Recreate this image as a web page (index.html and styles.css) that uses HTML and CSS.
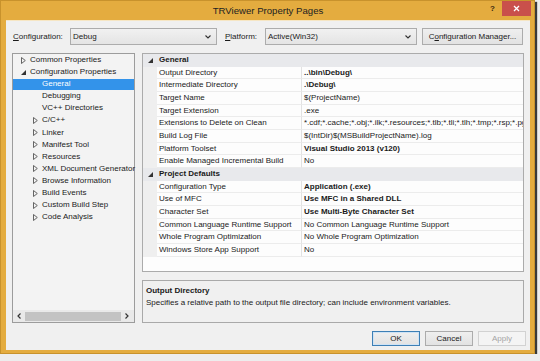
FILE: index.html
```html
<!DOCTYPE html>
<html>
<head>
<meta charset="utf-8">
<link rel="stylesheet" href="styles.css">
</head>
<body>
<div class="window">
  <div class="titlebar">
    <div></div>
    <div class="title">TRViewer Property Pages</div>
    <div class="controls">
      <span class="help">?</span>
      <span class="close"><svg width="7" height="7" viewBox="0 0 7 7"><path d="M1 1L6 6M6 1L1 6" stroke="#fff" stroke-width="1.3"/></svg></span>
    </div>
  </div>
  <div class="client">
    <div class="config-row">
      <span class="lbl lbl-config"><u>C</u>onfiguration:</span>
      <div class="combo combo-config"><span>Debug</span><svg width="6" height="4" viewBox="0 0 6 4"><path d="M0.5 0.5L3 3L5.5 0.5" fill="none" stroke="#333" stroke-width="1.1"/></svg></div>
      <span class="lbl lbl-platform"><u>P</u>latform:</span>
      <div class="combo combo-platform"><span>Active(Win32)</span><svg width="6" height="4" viewBox="0 0 6 4"><path d="M0.5 0.5L3 3L5.5 0.5" fill="none" stroke="#333" stroke-width="1.1"/></svg></div>
      <div class="btn btn-manager">C<u>o</u>nfiguration Manager...</div>
    </div>
    <div class="main">
      <div class="tree">
        <div class="tree-items">
          <div class="ti l0"><span class="tw"><svg width="5" height="7" viewBox="0 0 5 7"><path d="M0.5 0.5L4.3 3.5L0.5 6.5Z" fill="none" stroke="#555" stroke-width="0.9"/></svg></span>Common Properties</div>
          <div class="ti l0"><span class="tw"><svg width="5" height="5" viewBox="0 0 5 5"><path d="M5 0L5 5L0 5Z" fill="#333"/></svg></span>Configuration Properties</div>
          <div class="ti l1 sel"><span class="tw"></span>General</div>
          <div class="ti l1"><span class="tw"></span>Debugging</div>
          <div class="ti l1"><span class="tw"></span>VC++ Directories</div>
          <div class="ti l1"><span class="tw"><svg width="5" height="7" viewBox="0 0 5 7"><path d="M0.5 0.5L4.3 3.5L0.5 6.5Z" fill="none" stroke="#555" stroke-width="0.9"/></svg></span>C/C++</div>
          <div class="ti l1"><span class="tw"><svg width="5" height="7" viewBox="0 0 5 7"><path d="M0.5 0.5L4.3 3.5L0.5 6.5Z" fill="none" stroke="#555" stroke-width="0.9"/></svg></span>Linker</div>
          <div class="ti l1"><span class="tw"><svg width="5" height="7" viewBox="0 0 5 7"><path d="M0.5 0.5L4.3 3.5L0.5 6.5Z" fill="none" stroke="#555" stroke-width="0.9"/></svg></span>Manifest Tool</div>
          <div class="ti l1"><span class="tw"><svg width="5" height="7" viewBox="0 0 5 7"><path d="M0.5 0.5L4.3 3.5L0.5 6.5Z" fill="none" stroke="#555" stroke-width="0.9"/></svg></span>Resources</div>
          <div class="ti l1"><span class="tw"><svg width="5" height="7" viewBox="0 0 5 7"><path d="M0.5 0.5L4.3 3.5L0.5 6.5Z" fill="none" stroke="#555" stroke-width="0.9"/></svg></span>XML Document Generator</div>
          <div class="ti l1"><span class="tw"><svg width="5" height="7" viewBox="0 0 5 7"><path d="M0.5 0.5L4.3 3.5L0.5 6.5Z" fill="none" stroke="#555" stroke-width="0.9"/></svg></span>Browse Information</div>
          <div class="ti l1"><span class="tw"><svg width="5" height="7" viewBox="0 0 5 7"><path d="M0.5 0.5L4.3 3.5L0.5 6.5Z" fill="none" stroke="#555" stroke-width="0.9"/></svg></span>Build Events</div>
          <div class="ti l1"><span class="tw"><svg width="5" height="7" viewBox="0 0 5 7"><path d="M0.5 0.5L4.3 3.5L0.5 6.5Z" fill="none" stroke="#555" stroke-width="0.9"/></svg></span>Custom Build Step</div>
          <div class="ti l1"><span class="tw"><svg width="5" height="7" viewBox="0 0 5 7"><path d="M0.5 0.5L4.3 3.5L0.5 6.5Z" fill="none" stroke="#555" stroke-width="0.9"/></svg></span>Code Analysis</div>
        </div>
        <div class="hscroll">
          <span class="arrow"><svg width="4" height="6" viewBox="0 0 4 6"><path d="M3.5 0.5L1 3L3.5 5.5" fill="none" stroke="#333" stroke-width="1.2"/></svg></span>
          <span class="thumb"></span>
          <span class="arrow"><svg width="4" height="6" viewBox="0 0 4 6"><path d="M0.5 0.5L3 3L0.5 5.5" fill="none" stroke="#333" stroke-width="1.2"/></svg></span>
        </div>
      </div>
      <div class="right">
        <div class="grid">
          <div class="row hdr"><span class="gut"><svg width="5" height="5" viewBox="0 0 5 5"><path d="M5 0L5 5L0 5Z" fill="#333"/></svg></span><span class="htext">General</span></div>
          <div class="row"><span class="gut"></span><span class="name">Output Directory</span><span class="val b">..\bin\Debug\</span></div>
          <div class="row"><span class="gut"></span><span class="name">Intermediate Directory</span><span class="val b">.\Debug\</span></div>
          <div class="row"><span class="gut"></span><span class="name">Target Name</span><span class="val">$(ProjectName)</span></div>
          <div class="row"><span class="gut"></span><span class="name">Target Extension</span><span class="val">.exe</span></div>
          <div class="row"><span class="gut"></span><span class="name">Extensions to Delete on Clean</span><span class="val">*.cdf;*.cache;*.obj;*.ilk;*.resources;*.tlb;*.tli;*.tlh;*.tmp;*.rsp;*.pg</span></div>
          <div class="row"><span class="gut"></span><span class="name">Build Log File</span><span class="val">$(IntDir)$(MSBuildProjectName).log</span></div>
          <div class="row"><span class="gut"></span><span class="name">Platform Toolset</span><span class="val b">Visual Studio 2013 (v120)</span></div>
          <div class="row"><span class="gut"></span><span class="name">Enable Managed Incremental Build</span><span class="val">No</span></div>
          <div class="row hdr"><span class="gut"><svg width="5" height="5" viewBox="0 0 5 5"><path d="M5 0L5 5L0 5Z" fill="#333"/></svg></span><span class="htext">Project Defaults</span></div>
          <div class="row"><span class="gut"></span><span class="name">Configuration Type</span><span class="val b">Application (.exe)</span></div>
          <div class="row"><span class="gut"></span><span class="name">Use of MFC</span><span class="val b">Use MFC in a Shared DLL</span></div>
          <div class="row"><span class="gut"></span><span class="name">Character Set</span><span class="val b">Use Multi-Byte Character Set</span></div>
          <div class="row"><span class="gut"></span><span class="name">Common Language Runtime Support</span><span class="val">No Common Language Runtime Support</span></div>
          <div class="row"><span class="gut"></span><span class="name">Whole Program Optimization</span><span class="val">No Whole Program Optimization</span></div>
          <div class="row"><span class="gut"></span><span class="name">Windows Store App Support</span><span class="val">No</span></div>
        </div>
        <div class="desc">
          <div class="desc-title">Output Directory</div>
          <div class="desc-text">Specifies a relative path to the output file directory; can include environment variables.</div>
        </div>
      </div>
    </div>
    <div class="buttons">
      <div class="btn btn-ok">OK</div>
      <div class="btn">Cancel</div>
      <div class="btn btn-disabled">Apply</div>
    </div>
  </div>
</div>
</body>
</html>
```

FILE: styles.css
```css
* { box-sizing: border-box; }
body {
  margin: 0;
  background: #ededed;
  font-family: "Liberation Sans", Arial, sans-serif;
  font-size: 8px;
  color: #1a1a1a;
}
.window {
  width: 535px;
  height: 354px;
  background: #e4ac3f;
  border: 1px solid #c8922c;
  box-shadow: 2px 2px 1px #3a3a3a;
  display: flex;
  flex-direction: column;
  padding: 0 4px 3px 5px;
}
.titlebar {
  height: 19px;
  flex: none;
  display: grid;
  grid-template-columns: 1fr auto 1fr;
  align-items: start;
}
.title {
  font-size: 9.6px;
  line-height: 19px;
  color: #222;
}
.controls {
  display: flex;
  justify-content: flex-end;
  align-items: flex-start;
  margin-right: -1px;
}
.help {
  font-weight: bold;
  font-size: 8px;
  line-height: 15px;
  color: #3a2a10;
  margin-right: 7px;
}
.close {
  width: 29px;
  height: 15px;
  background: #c9504b;
  display: flex;
  align-items: center;
  justify-content: center;
}
.client {
  flex: 1;
  min-width: 0;
  background: #f0f0f0;
  border-top: 1px solid #f6e6c4;
  padding: 7px 6px 0 6px;
  display: flex;
  flex-direction: column;
}
.config-row {
  height: 17px;
  display: flex;
  align-items: center;
  flex: none;
}
.lbl { line-height: 17px; }
.lbl-config { margin-left: 1px; width: 57px; }
.lbl-platform { margin-left: 8px; width: 40px; }
.combo {
  height: 17px;
  border: 1px solid #acacac;
  background: linear-gradient(#f1f1f1, #e4e4e4);
  display: flex;
  align-items: center;
  justify-content: space-between;
  padding: 0 5px 0 2px;
}
.combo-config { width: 147px; }
.combo-platform { width: 152px; }
.btn {
  height: 15px;
  width: 48px;
  border: 1px solid #acacac;
  background: linear-gradient(#efefef, #e2e2e2);
  display: flex;
  align-items: center;
  justify-content: center;
}
.btn-manager {
  margin-left: 5px;
  width: 101px;
  height: 17px;
}
.main {
  margin-top: 8px;
  height: 270px;
  flex: none;
  display: flex;
  gap: 7px;
  min-width: 0;
}
.tree {
  width: 123px;
  flex: none;
  border: 1px solid #9c9c9c;
  background: #f3f3f3;
  display: flex;
  flex-direction: column;
}
.tree-items { flex: 1; }
.ti {
  height: 12.1px;
  line-height: 12.1px;
  display: flex;
  align-items: center;
  white-space: nowrap;
}
.ti.l0 { padding-left: 7px; }
.ti.l1 { padding-left: 19px; }
.tw {
  width: 10px;
  flex: none;
  display: flex;
  align-items: center;
  padding-left: 1px;
}
.ti.sel {
  background: #3393ea;
  color: #fff;
  height: 11px;
  margin: 0.5px 0 0.6px;
}
.hscroll {
  height: 12px;
  flex: none;
  display: flex;
  align-items: center;
  background: #e9e9e9;
}
.arrow {
  width: 12px;
  display: flex;
  justify-content: center;
}
.thumb {
  width: 96px;
  height: 9px;
  background: #c3c3c3;
}
.right {
  flex: 1;
  min-width: 0;
  display: flex;
  flex-direction: column;
  gap: 8px;
}
.grid {
  height: 219px;
  flex: none;
  border: 1px solid #ababab;
  background: #fdfdfd;
  overflow: hidden;
}
.row {
  height: 12.67px;
  line-height: 12px;
  display: flex;
}
.gut {
  width: 14px;
  flex: none;
  background: #efefef;
  display: flex;
  align-items: center;
  justify-content: center;
  padding-left: 1px;
}
.name {
  width: 145px;
  flex: none;
  padding-left: 2px;
  border-right: 1px solid #e2e2e2;
  border-bottom: 1px solid #ececec;
  white-space: nowrap;
  overflow: hidden;
}
.val {
  flex: 1;
  min-width: 0;
  padding-left: 2px;
  border-bottom: 1px solid #ececec;
  white-space: nowrap;
  overflow: hidden;
}
.b { font-weight: bold; }
.hdr { background: #e8e9ec; }
.hdr .gut { background: #e8e9ec; }
.htext {
  padding-left: 2px;
  font-weight: bold;
}
.desc {
  flex: 1;
  border: 1px solid #a9a9a9;
  background: #f0f0f0;
  padding: 4px 3px;
  line-height: 12px;
}
.desc-title { font-weight: bold; }
.buttons {
  margin-top: 8px;
  margin-right: -2px;
  display: flex;
  justify-content: flex-end;
  gap: 5px;
}
.btn-ok {
  border-color: #3d7fb5;
  box-shadow: inset 0 0 0 1px #cfe3f5;
}
.btn-disabled {
  border-color: #d2d2d2;
  background: #f4f4f4;
  color: #a4a4a4;
}
```
